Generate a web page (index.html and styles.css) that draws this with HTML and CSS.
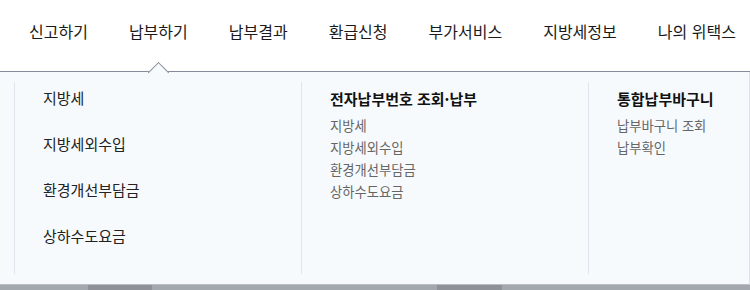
FILE: index.html
```html
<!DOCTYPE html>
<html lang="ko">
<head>
<meta charset="utf-8">
<link rel="stylesheet" href="styles.css">
</head>
<body>
<div class="page">
  <nav class="gnb">
    <a class="gnb-item">신고하기</a>
    <a class="gnb-item active">납부하기<span class="caret"></span></a>
    <a class="gnb-item">납부결과</a>
    <a class="gnb-item">환급신청</a>
    <a class="gnb-item">부가서비스</a>
    <a class="gnb-item">지방세정보</a>
    <a class="gnb-item">나의 위택스</a>
  </nav>
  <div class="dropdown">
    <div class="col col-main">
      <a class="main-link">지방세</a>
      <a class="main-link">지방세외수입</a>
      <a class="main-link">환경개선부담금</a>
      <a class="main-link">상하수도요금</a>
    </div>
    <div class="col">
      <div class="col-title">전자납부번호 조회·납부</div>
      <ul class="sub-list">
        <li>지방세</li>
        <li>지방세외수입</li>
        <li>환경개선부담금</li>
        <li>상하수도요금</li>
      </ul>
    </div>
    <div class="col col-last">
      <div class="col-title">통합납부바구니</div>
      <ul class="sub-list">
        <li>납부바구니 조회</li>
        <li>납부확인</li>
      </ul>
    </div>
  </div>
  <div class="backdrop"></div>
</div>
</body>
</html>
```

FILE: styles.css
```css
* { box-sizing: border-box; }
html, body { margin: 0; padding: 0; background: #ffffff; }
body {
  font-family: "Noto Sans CJK KR", "Noto Sans", sans-serif;
  color: #222;
  width: 750px;
  height: 290px;
  overflow: hidden;
}
.page { display: flex; flex-direction: column; width: 750px; }

.gnb {
  display: flex;
  gap: 41px;
  height: 72px;
  padding: 20px 0 0 29px;
  border-bottom: 1px solid #858b99;
  background: #fff;
}
.gnb-item {
  position: relative;
  font-size: 16px;
  line-height: 22px;
  color: #1a1a1a;
  white-space: nowrap;
}
.caret {
  position: absolute;
  left: 50%;
  top: 45px;
  width: 15px;
  height: 15px;
  margin-left: -7px;
  background: #f7fafd;
  border-top: 1px solid #858b99;
  border-left: 1px solid #858b99;
  transform: rotate(45deg);
}

.dropdown {
  display: flex;
  width: 750px;
  overflow: hidden;
  background: #f7fafd;
  padding: 10px 0 10px 14px;
  border-right: 1px solid #dde2ea;
  height: 213px;
  border-bottom: 1px solid #b9bdc5;
}
.col {
  width: 287px;
  flex: none;
  border-left: 1px solid #e0e5ed;
  padding: 6px 0 0 28px;
}
.col-last { width: auto; flex: 1; }
.col-main {
  display: flex;
  flex-direction: column;
  gap: 24px;
  padding-top: 5px;
}
.main-link {
  font-size: 15px;
  line-height: 22px;
  color: #222;
}
.col-title {
  font-size: 15px;
  line-height: 22px;
  font-weight: 700;
  color: #111;
}
.sub-list {
  list-style: none;
  margin: 5px 0 0;
  padding: 0;
}
.sub-list li {
  font-size: 13.3px;
  line-height: 22px;
  color: #666;
}
.backdrop {
  height: 5px;
  background:
    linear-gradient(to right,
      #a3a7ae 0, #a3a7ae 88px,
      #8e9197 88px, #8e9197 152px,
      #a3a7ae 152px, #a3a7ae 437px,
      #8e9197 437px, #8e9197 502px,
      #a3a7ae 502px);
}
```
